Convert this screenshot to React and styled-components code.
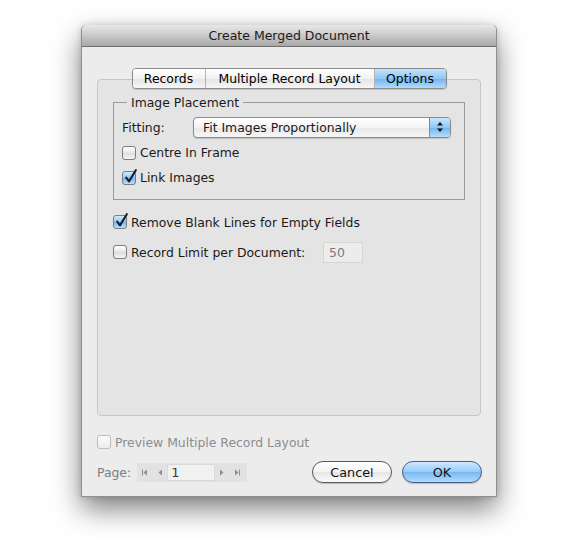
import styled, { createGlobalStyle } from 'styled-components';

const GlobalStyle = createGlobalStyle`
    html, body {
        margin: 0;
        background: #ffffff;
    }
    body {
        font-family: "DejaVu Sans", "Liberation Sans", sans-serif;
        font-size: 12.4px;
        color: #000;
    }
`

const Screen = styled.div`
    width: 580px;
    height: 552px;
    padding: 25px 0 0 81px;
    box-sizing: border-box;
`

const Window = styled.div`
    width: 416px;
    height: 472px;
    box-sizing: border-box;
    background: #ececec;
    border: 1px solid #8f8f8f;
    border-top: none;
    border-radius: 5px 5px 0 0;
    box-shadow: 0 12px 28px rgba(0, 0, 0, 0.5), 0 0 6px rgba(0, 0, 0, 0.15);
    display: flex;
    flex-direction: column;
`

const TitleBar = styled.div`
    height: 22px;
    flex: none;
    border-radius: 5px 5px 0 0;
    background: linear-gradient(#e8e8e8, #c9c9c9 50%, #a8a8a8);
    border-bottom: 1px solid #6f6f6f;
    box-sizing: border-box;
    display: flex;
    align-items: center;
    justify-content: center;
    font-size: 12.5px;
    color: #1a1a1a;
`

const Body = styled.div`
    flex: 1;
    display: flex;
    flex-direction: column;
    padding: 21px 15px 13px 15px;
`

const TabView = styled.div`
    display: flex;
    flex-direction: column;
    align-items: center;
`

const TabStrip = styled.div`
    display: flex;
    height: 21px;
    margin-bottom: -10px;
    position: relative;
    z-index: 1;
    border: 1px solid #8a8a8a;
    border-radius: 4px;
    box-sizing: border-box;
    overflow: hidden;
    box-shadow: 0 1px 1px rgba(0, 0, 0, 0.15);
`

const Tab = styled.div`
    width: ${p => p.$w}px;
    box-sizing: border-box;
    display: flex;
    align-items: center;
    justify-content: center;
    border-left: ${p => (p.$first ? 'none' : '1px solid #b4b4b4')};
    background: ${p => (p.$active
        ? 'linear-gradient(#c5e3fb, #8ec6f4 50%, #6fb4ef 51%, #b3dcfc)'
        : 'linear-gradient(#ffffff, #f2f2f2 50%, #e4e4e4 51%, #f6f6f6)')};
`

const TabBox = styled.div`
    align-self: stretch;
    height: 337px;
    box-sizing: border-box;
    border: 1px solid #c6c6c6;
    border-radius: 4px;
    background: #e4e4e4;
    padding: 15px 15px 0 15px;
    display: flex;
    flex-direction: column;
`

const Group = styled.fieldset`
    margin: 0;
    height: 105px;
    box-sizing: border-box;
    border: 1px solid #9a9a9a;
    border-radius: 0;
    padding: 4px 13px 0 8px;
    display: flex;
    flex-direction: column;

    & legend {
        padding: 0 4px;
        margin-left: 5px;
        color: #1a1a1a;
    }
`

const Row = styled.div`
    display: flex;
    align-items: center;
    height: ${p => p.$h || 25}px;
    gap: 4px;
    color: ${p => (p.$dim ? '#8c8c8c' : '#1a1a1a')};
`

const Label = styled.span`
    width: ${p => p.$w}px;
    flex: none;
`

const Box = styled.span`
    width: 14px;
    height: 14px;
    flex: none;
    box-sizing: border-box;
    border-radius: 3px;
    border: 1px solid ${p => (p.$dim ? '#bdbdbd' : '#7d7d7d')};
    background: ${p => (p.$on
        ? 'linear-gradient(#d3ecff, #8ec7f5 50%, #74b8f0 51%, #b8e0ff)'
        : p.$dim ? 'linear-gradient(#fafafa, #eeeeee)' : 'linear-gradient(#ffffff, #e6e6e6 50%, #dcdcdc 51%, #f4f4f4)')};
    position: relative;

    & svg {
        position: absolute;
        left: 1px;
        top: -3px;
    }
`

const Check = ({ on, dim }) => (
    <Box $on={on} $dim={dim}>
        {on && (
            <svg width="14" height="15" viewBox="0 0 14 15">
                <path d="M2.2 8.6 L5 12.4 L11.8 1.2" fill="none" stroke="#1b1b2e" strokeWidth="2.1" strokeLinejoin="round" strokeLinecap="round" />
            </svg>
        )}
    </Box>
)

const Popup = styled.div`
    flex: 1;
    height: 21px;
    box-sizing: border-box;
    border: 1px solid #8a8a8a;
    border-radius: 4px;
    display: flex;
    overflow: hidden;
    box-shadow: 0 1px 1px rgba(0, 0, 0, 0.15);
    background: linear-gradient(#ffffff, #f3f3f3 50%, #e6e6e6 51%, #f7f7f7);
`

const PopupText = styled.span`
    flex: 1;
    padding-left: 9px;
    display: flex;
    align-items: center;
`

const PopupArrows = styled.span`
    width: 20px;
    border-left: 1px solid #6b8fb5;
    background: linear-gradient(#c9e6fd, #8fc7f4 50%, #70b4ef 51%, #b5ddfc);
    display: flex;
    align-items: center;
    justify-content: center;
`

const NumberField = styled.div`
    width: 40px;
    height: 21px;
    box-sizing: border-box;
    margin-left: 12px;
    border: 1px solid #d6d6d6;
    background: #ececec;
    color: #7a7a7a;
    padding-left: 5px;
    display: flex;
    align-items: center;
`

const Footer = styled.div`
    margin-top: auto;
    display: flex;
    flex-direction: column;
`

const BottomRow = styled.div`
    display: flex;
    align-items: center;
    height: 22px;
    margin-top: 6px;
`

const PageLabel = styled.span`
    color: #7d7d7d;
    margin-right: 6px;
`

const Pager = styled.div`
    width: 110px;
    height: 19px;
    display: flex;
    align-items: center;
    background: #e2e2e2;
    color: #8a8a8a;
`

const NavBtn = styled.span`
    width: ${p => p.$w || 14}px;
    display: flex;
    justify-content: center;
    align-items: center;
`

const PageField = styled.div`
    width: 48px;
    height: 17px;
    box-sizing: border-box;
    background: #f1f1f1;
    border: 1px solid #dadada;
    color: #3a3a3a;
    padding-left: 3px;
    display: flex;
    align-items: center;
    font-size: 13px;
`

const Buttons = styled.div`
    margin-left: auto;
    margin-right: -1px;
    display: flex;
    gap: 10px;
`

const PillButton = styled.div`
    width: 80px;
    height: 22px;
    box-sizing: border-box;
    border-radius: 11px;
    border: 1px solid ${p => (p.$primary ? '#4b5f8c' : '#5a5a5a')};
    display: flex;
    align-items: center;
    justify-content: center;
    font-size: 12.8px;
    color: #111;
    box-shadow: 0 1px 1px rgba(0, 0, 0, 0.2);
    background: ${p => (p.$primary
        ? 'linear-gradient(#cde8ff, #96ccf7 50%, #76b9f1 51%, #b0dcff)'
        : 'linear-gradient(#ffffff, #f5f5f5 50%, #e6e6e6 51%, #fafafa)')};
`

const Arrow = ({ dir, bar }) => (
    <svg width="8" height="9" viewBox="0 0 8 9">
        {dir === 'left'
            ? <path d="M6 1.5 L2.5 4.5 L6 7.5 Z" fill="#8d8d8d" />
            : <path d="M2 1.5 L5.5 4.5 L2 7.5 Z" fill="#8d8d8d" />}
        {bar && <rect x={dir === 'left' ? 1 : 6} y="1.5" width="1" height="6" fill="#8d8d8d" />}
    </svg>
)

const App = () => (
    <Screen>
        <GlobalStyle />
        <Window>
            <TitleBar>Create Merged Document</TitleBar>
            <Body>
                <TabView>
                    <TabStrip>
                        <Tab $w={72} $first>Records</Tab>
                        <Tab $w={169}>Multiple Record Layout</Tab>
                        <Tab $w={72} $active>Options</Tab>
                    </TabStrip>
                    <TabBox>
                        <Group>
                            <legend>Image Placement</legend>
                            <Row $h={26}>
                                <Label $w={67}>Fitting:</Label>
                                <Popup>
                                    <PopupText>Fit Images Proportionally</PopupText>
                                    <PopupArrows>
                                        <svg width="8" height="12" viewBox="0 0 8 12">
                                            <path d="M4 1 L7 4.5 L1 4.5 Z M4 11 L7 7.5 L1 7.5 Z" fill="#111" />
                                        </svg>
                                    </PopupArrows>
                                </Popup>
                            </Row>
                            <Row>
                                <Check />
                                <span>Centre In Frame</span>
                            </Row>
                            <Row>
                                <Check on />
                                <span>Link Images</span>
                            </Row>
                        </Group>
                        <Row $h={30} style={{ marginTop: 7 }}>
                            <Check on />
                            <span>Remove Blank Lines for Empty Fields</span>
                        </Row>
                        <Row $h={30}>
                            <Check />
                            <Label $w={176}>Record Limit per Document:</Label>
                            <NumberField>50</NumberField>
                        </Row>
                    </TabBox>
                </TabView>
                <Footer>
                    <Row $h={26} $dim>
                        <Check dim />
                        <span>Preview Multiple Record Layout</span>
                    </Row>
                    <BottomRow>
                        <PageLabel>Page:</PageLabel>
                        <Pager>
                            <NavBtn $w={16}><Arrow dir="left" bar /></NavBtn>
                            <NavBtn $w={14}><Arrow dir="left" /></NavBtn>
                            <PageField>1</PageField>
                            <NavBtn $w={14}><Arrow dir="right" /></NavBtn>
                            <NavBtn $w={16}><Arrow dir="right" bar /></NavBtn>
                        </Pager>
                        <Buttons>
                            <PillButton>Cancel</PillButton>
                            <PillButton $primary>OK</PillButton>
                        </Buttons>
                    </BottomRow>
                </Footer>
            </Body>
        </Window>
    </Screen>
)

export default App;
